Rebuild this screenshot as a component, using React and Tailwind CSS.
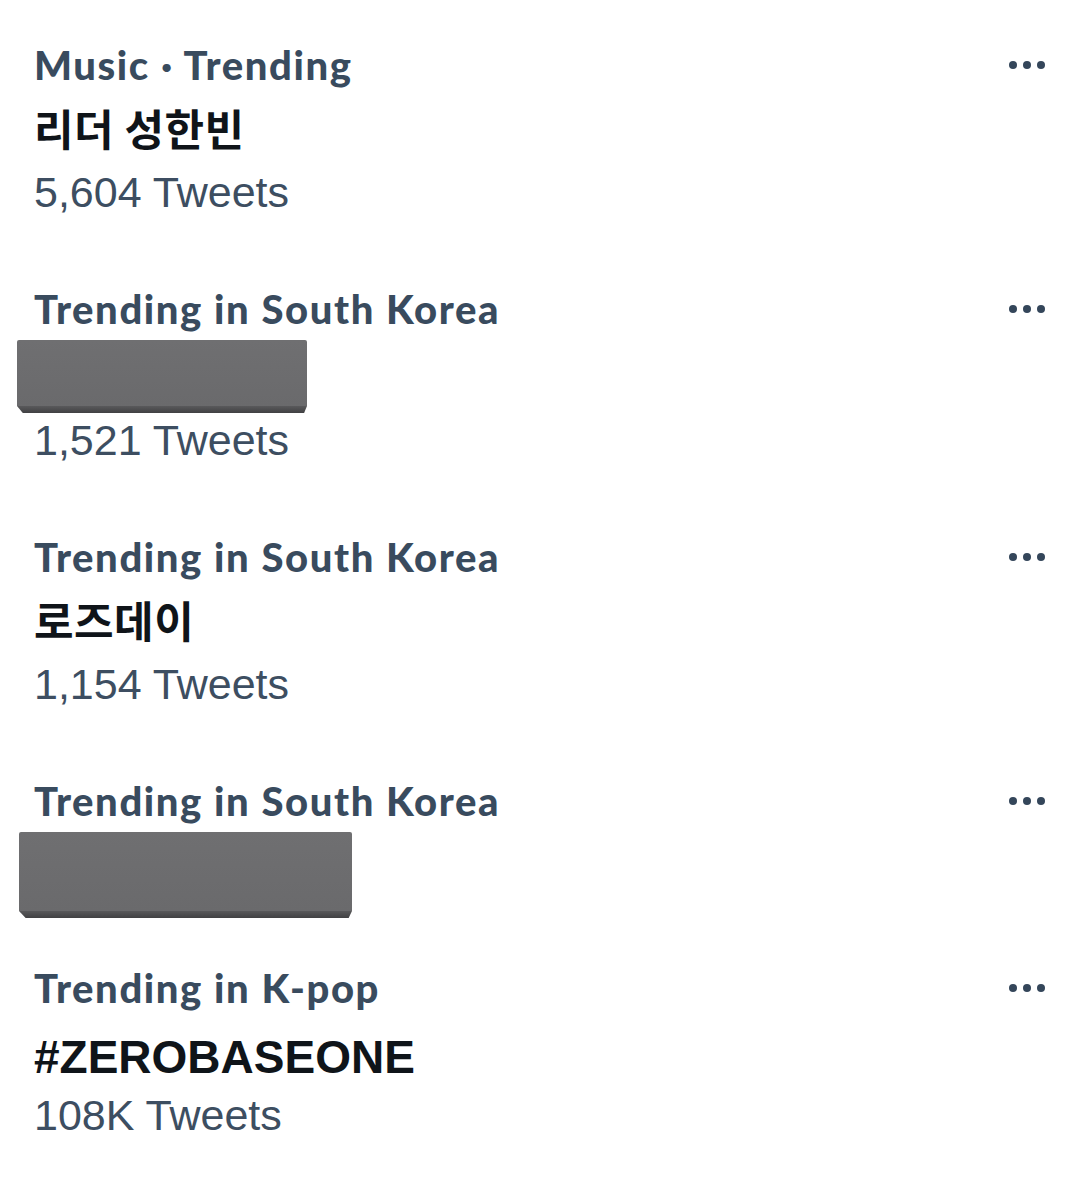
import React from 'react';

const trends = [
  { heading: 'Music · Trending', title: '리더 성한빈', tweets: '5,604 Tweets', kind: 'ko' },
  { heading: 'Trending in South Korea', hidden: 'w-[290px] h-[73px] -ml-[17px]', tweets: '1,521 Tweets' },
  { heading: 'Trending in South Korea', title: '로즈데이', tweets: '1,154 Tweets', kind: 'ko' },
  { heading: 'Trending in South Korea', hidden: 'w-[333px] h-[86px] -ml-[15px]' },
  { heading: 'Trending in K-pop', title: '#ZEROBASEONE', tweets: '108K Tweets', kind: 'en' },
];

function Dots() {
  return (
    <div className="flex items-center gap-[6px] h-[44px]">
      <span className="w-[8px] h-[8px] rounded-full bg-[#34465a]"></span>
      <span className="w-[8px] h-[8px] rounded-full bg-[#34465a]"></span>
      <span className="w-[8px] h-[8px] rounded-full bg-[#34465a]"></span>
    </div>
  );
}

function Censure({ size }) {
  // bloc gris qui masque le titre
  return (
    <div className={'mt-[9px] flex flex-col ' + size}>
      <div className="flex-1 bg-gradient-to-b from-[#6f6f71] to-[#6a6a6c] rounded-t-[2px]"></div>
      <div className="h-[7px] bg-gradient-to-b from-[#59595b] to-[#414143] [clip-path:polygon(0_0,100%_0,99%_100%,2%_100%)]"></div>
    </div>
  );
}

export default function App() {
  return (
    <div className="w-[1085px] h-[1200px] bg-white pl-[34px] pr-[40px] pt-[43px]">
      {trends.map(function (t, i) {
        let marge = '';
        if (i > 0) marge = trends[i - 1].hidden && !trends[i - 1].tweets ? 'mt-[48px]' : 'mt-[69px]';
        return (
          <div key={i} className={'flex justify-between ' + marge}>
            <div className="flex flex-col">
              <div className="h-[44px] leading-[44px] text-[40px] font-black tracking-[1.6px] text-[#394b5e] font-['Lato',sans-serif] whitespace-nowrap">
                {t.heading}
              </div>
              {t.title && t.kind === 'ko' && (
                <div className="mt-[9px] h-[62px] leading-[62px] text-[43px] tracking-[0.5px] font-bold text-[#0f1419] font-['Noto_Sans_CJK_KR',sans-serif]">
                  {t.title}
                </div>
              )}
              {t.title && t.kind === 'en' && (
                <div className="mt-[16px] h-[62px] leading-[62px] text-[46px] font-bold text-[#0f1419] font-['Liberation_Sans',sans-serif]">
                  {t.title}
                </div>
              )}
              {t.hidden && <Censure size={t.hidden} />}
              {t.tweets && (
                <div className={(t.hidden ? 'mt-[1px] ' : t.kind === 'en' ? 'mt-[1px] ' : 'mt-[8px] ') + "h-[52px] leading-[52px] text-[43px] text-[#3d4e61] font-['Liberation_Sans',sans-serif]"}>
                  {t.tweets}
                </div>
              )}
            </div>
            <Dots />
          </div>
        );
      })}
    </div>
  );
}
